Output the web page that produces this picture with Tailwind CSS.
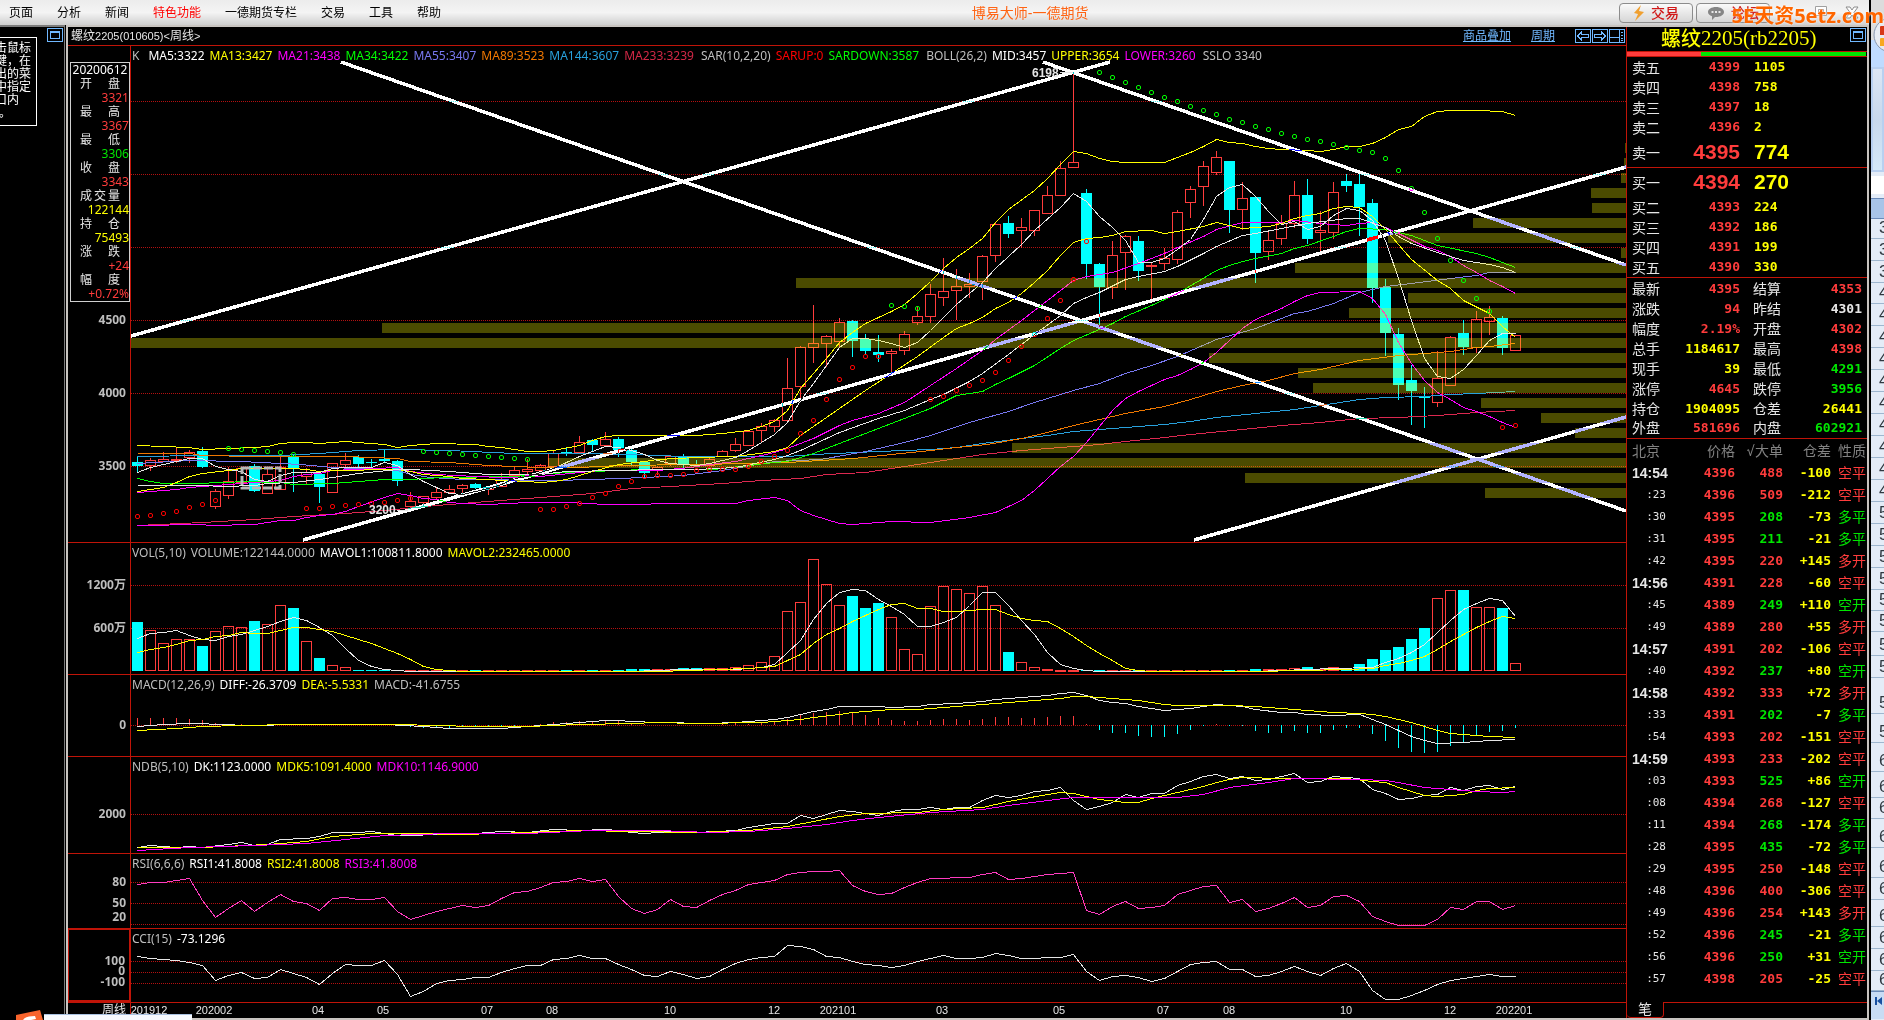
<!DOCTYPE html>
<html lang="zh-CN">
  <head>
    <meta charset="utf-8" />
    <title>博易大师-一德期货</title>
    <script src="https://cdn.jsdelivr.net/npm/@tailwindcss/browser@4"></script>
  </head>
  <body class="relative flex h-screen overflow-hidden bg-black font-['Liberation_Sans','Noto_Sans_CJK_SC',sans-serif] text-xs text-[#e6e6e6]">
    <div class="flex min-w-0 flex-1 flex-col">
      <!-- Menu bar -->
      <header class="relative flex h-[25px] shrink-0 items-center justify-between bg-linear-to-b from-[#ececec] via-[#f4f4f4] to-[#cfcfcf] text-black">
        <nav class="flex gap-6 pl-[9px] leading-6 whitespace-nowrap">
          <a href="#">页面</a>
          <a href="#">分析</a>
          <a href="#">新闻</a>
          <a href="#" class="text-[#ff0000]">特色功能</a>
          <a href="#">一德期货专栏</a>
          <a href="#">交易</a>
          <a href="#">工具</a>
          <a href="#">帮助</a>
        </nav>
        <h1 class="text-sm text-[#ff6414]">博易大师-一德期货</h1>
        <div class="flex w-[250px] items-center gap-[3px]">
          <button class="flex h-5 w-[74px] items-center justify-center gap-1.5 rounded-sm border border-[#8c8c8c] bg-linear-to-b from-[#fafafa] to-[#d6d6d6] text-sm font-medium text-[#d01818]">
            <svg viewBox="0 0 12 16" class="h-4 w-3"><path d="M8 0 1 8l4 1-3 7 9-9-5-1z" fill="#f0a030" /></svg>交易
          </button>
          <button class="flex h-5 w-[74px] items-center justify-center gap-1.5 rounded-sm border border-[#8c8c8c] bg-linear-to-b from-[#fafafa] to-[#d6d6d6] text-sm font-medium text-[#d01818]">
            <svg viewBox="0 0 18 14" class="h-3.5 w-[18px]">
              <path d="M9 1c4.600 0 8 2.200 8 5s-3.400 5-8 5l-1-.1L5 14v-3.700C2.600 9.500 1 8 1 6c0-2.800 3.400-5 8-5z" fill="#858585" />
              <path d="M4.500 5h2v2h-2zM8 5h2v2H8zM11.500 5h2v2h-2z" fill="#e8e8e8" />
            </svg>论坛
          </button>
          <button aria-label="还原" class="ml-10 h-4 w-4">
            <svg viewBox="0 0 16 16" fill="#fff" stroke="#a0a0a0"><path d="M2.500 1.500h11v9h-11zM5.500 4.500h5v3h-5z" /></svg>
          </button>
          <button aria-label="关闭" class="ml-3 h-4 w-4">
            <svg viewBox="0 0 16 16" fill="#fff" stroke="#8c8c8c"><path d="M2 2h4l2 3 2-3h4L10 7.500 14 13h-4L8 10l-2 3H2l4-5.500z" /></svg>
          </button>
        </div>
      </header>

      <div class="flex min-h-0 flex-1">
        <!-- Empty side window -->
        <aside class="relative w-[65px] shrink-0 overflow-hidden border-t-2 border-r border-[#7c7c7c]">
          <button aria-label="最大化" class="absolute top-px right-px h-[14px] w-4">
            <svg viewBox="0 0 16 14" fill="none" stroke="#70b8ff" shape-rendering="crispEdges"><path d="M.5.500h15v13H.5zM3.500 3.500h9v7h-9zM3.500 4.500h9" /></svg>
          </button>
          <p class="absolute top-[10px] -left-2 h-[89px] w-[45px] border border-white pt-1 pl-0.5 leading-[13px] whitespace-nowrap text-white">
            击鼠标<br />键，在<br />出的菜<br />中指定<br />口内<br /><span class="ml-1">。</span>
          </p>
        </aside>

        <main class="ml-px flex min-w-0 flex-1 flex-col border-t-2 border-b-2 border-l-2 border-[#c8c4c0]">
          <div class="flex min-h-0 flex-1">
            <!-- Chart window -->
            <div class="flex min-w-0 flex-1 flex-col">
              <div class="flex h-[19px] shrink-0 items-center justify-between border-b border-[#c01408] pr-px pl-[3px]">
                <h2>螺纹<span class="text-[11px]">2205(010605)&lt;</span>周线<span class="text-[11px]">&gt;</span></h2>
                <div class="flex items-center text-[#70b8ff]">
                  <a href="#" class="mr-5 underline">商品叠加</a>
                  <a href="#" class="mr-5 underline">周期</a>
                  <svg viewBox="0 0 50 15" class="h-[15px] w-[50px]" fill="none" stroke="#70b8ff" shape-rendering="crispEdges">
                    <path d="M.5.500h15v13H.5zM17.500.500h15v13h-15zM34.500.500h15v13h-15zM34.500 8.500h10M44.500.500v13M46 3.500h2M46 6.500h2M46 9.500h2M46 11.500h2" />
                    <path d="M2.500 7l4-4v2.500h7v3h-7V11zM30.500 7l-4-4v2.500h-7v3h7V11z" />
                  </svg>
                </div>
              </div>

              <div class="grid min-h-0 flex-1 grid-rows-[497fr_132fr_82fr_97fr_75fr_74fr] font-['Noto_Sans','Noto_Sans_CJK_SC',sans-serif] leading-5 whitespace-nowrap text-[#bebebe]">
                <section class="flex min-h-0 border-b border-[#c01408]">
                  <div id="axis-k" class="relative w-[63px] shrink-0 border-r border-[#c01408]">
                    <dl id="quote" class="mt-4 ml-0.5 border border-[#d0d0d0] text-right leading-[14px]"></dl>
                  </div>
                  <div class="relative min-w-0 flex-1">
                    <svg id="k" viewBox="131 46 1495 496" preserveAspectRatio="none" class="absolute inset-0 h-full w-full"></svg>
                    <p class="relative flex gap-[5px] pl-px">
                      <span class="mr-1">K</span>
                      <span class="text-white">MA5:3322</span>
                      <span class="text-[#ffff00]">MA13:3427</span>
                      <span class="text-[#ff00ff]">MA21:3438</span>
                      <span class="text-[#00ff00]">MA34:3422</span>
                      <span class="text-[#7878f0]">MA55:3407</span>
                      <span class="text-[#f07800]">MA89:3523</span>
                      <span class="text-[#28a0dc]">MA144:3607</span>
                      <span class="text-[#d22846]">MA233:3239</span>
                      <span class="ml-0.5">SAR(10,2,20)</span>
                      <span class="text-[#ff0000]">SARUP:0</span>
                      <span class="text-[#00ff00]">SARDOWN:3587</span>
                      <span class="ml-0.5">BOLL(26,2)</span>
                      <span class="text-white">MID:3457</span>
                      <span class="text-[#ffff00]">UPPER:3654</span>
                      <span class="text-[#ff00ff]">LOWER:3260</span>
                      <span class="ml-0.5">SSLO 3340</span>
                    </p>
                  </div>
                </section>

                <section class="flex min-h-0 border-b border-[#c01408]">
                  <div id="axis-vol" class="relative w-[63px] shrink-0 border-r border-[#c01408]"></div>
                  <div class="relative min-w-0 flex-1">
                    <svg id="vol" viewBox="131 543 1495 131" preserveAspectRatio="none" class="absolute inset-0 h-full w-full"></svg>
                    <p class="relative flex gap-[5px] pl-px">
                      <span>VOL(5,10)</span>
                      <span>VOLUME:122144.0000</span>
                      <span class="text-white">MAVOL1:100811.8000</span>
                      <span class="text-[#ffff00]">MAVOL2:232465.0000</span>
                    </p>
                  </div>
                </section>

                <section class="flex min-h-0 border-b border-[#c01408]">
                  <div id="axis-macd" class="relative w-[63px] shrink-0 border-r border-[#c01408]"></div>
                  <div class="relative min-w-0 flex-1">
                    <svg id="macd" viewBox="131 675 1495 81" preserveAspectRatio="none" class="absolute inset-0 h-full w-full"></svg>
                    <p class="relative flex gap-[5px] pl-px">
                      <span>MACD(12,26,9)</span>
                      <span class="text-white">DIFF:-26.3709</span>
                      <span class="text-[#ffff00]">DEA:-5.5331</span>
                      <span>MACD:-41.6755</span>
                    </p>
                  </div>
                </section>

                <section class="flex min-h-0 border-b border-[#c01408]">
                  <div id="axis-ndb" class="relative w-[63px] shrink-0 border-r border-[#c01408]"></div>
                  <div class="relative min-w-0 flex-1">
                    <svg id="ndb" viewBox="131 757 1495 96" preserveAspectRatio="none" class="absolute inset-0 h-full w-full"></svg>
                    <p class="relative flex gap-[5px] pl-px">
                      <span>NDB(5,10)</span>
                      <span class="text-white">DK:1123.0000</span>
                      <span class="text-[#ffff00]">MDK5:1091.4000</span>
                      <span class="text-[#ff00ff]">MDK10:1146.9000</span>
                    </p>
                  </div>
                </section>

                <section class="flex min-h-0 border-b border-[#c01408]">
                  <div id="axis-rsi" class="relative w-[63px] shrink-0 border-r border-[#c01408]"></div>
                  <div class="relative min-w-0 flex-1">
                    <svg id="rsi" viewBox="131 854 1495 74" preserveAspectRatio="none" class="absolute inset-0 h-full w-full"></svg>
                    <p class="relative flex gap-[5px] pl-px">
                      <span>RSI(6,6,6)</span>
                      <span class="text-white">RSI1:41.8008</span>
                      <span class="text-[#ffff00]">RSI2:41.8008</span>
                      <span class="text-[#ff00ff]">RSI3:41.8008</span>
                    </p>
                  </div>
                </section>

                <section class="flex min-h-0 border-b border-[#c01408]">
                  <div id="axis-cci" class="relative w-[63px] shrink-0 border border-r-2 border-b-2 border-[#c01408]"></div>
                  <div class="relative min-w-0 flex-1">
                    <svg id="cci" viewBox="131 929 1495 73" preserveAspectRatio="none" class="absolute inset-0 h-full w-full"></svg>
                    <p class="relative flex gap-[5px] pl-px">
                      <span>CCI(15)</span>
                      <span class="text-white">-73.1296</span>
                    </p>
                  </div>
                </section>
              </div>

              <div class="flex h-[15px] shrink-0 leading-[14px]">
                <div class="w-[63px] border-r border-[#c01408] pr-1 text-right">周线</div>
                <div id="dates" class="relative flex-1 text-[11px]"></div>
              </div>
            </div>

            <!-- Quote panel -->
            <aside class="flex w-[241px] shrink-0 flex-col border-l border-[#c01408]">
              <div class="relative flex h-6 shrink-0 items-center pl-[34px] text-xl font-medium text-[#ffff00]">
                螺纹<span class="font-['Liberation_Serif',serif] text-[21px]">2205(rb2205)</span>
                <button aria-label="最大化" class="absolute top-px right-px h-[14px] w-4">
                  <svg viewBox="0 0 16 14" fill="none" stroke="#70b8ff" shape-rendering="crispEdges"><path d="M.5.500h15v13H.5zM3.500 3.500h9v7h-9zM3.500 4.500h9" /></svg>
                </button>
              </div>
              <div class="flex h-[6px] shrink-0 border-y border-[#c01408]">
                <div class="w-[31%] bg-[#ff3c3c]"></div>
                <div class="mr-px flex-1 bg-[#00e600]"></div>
              </div>

              <table class="w-full font-['DejaVu_Sans_Mono','Noto_Sans_CJK_SC',monospace] text-[13px] leading-4 font-bold">
                <tbody id="asks" class="border-b border-[#c01408]"></tbody>
                <tbody id="bids" class="border-b border-[#c01408]"></tbody>
              </table>
              <table class="mt-px w-full border-b border-[#c01408] font-['DejaVu_Sans_Mono','Noto_Sans_CJK_SC',monospace] text-[13px] leading-4 font-bold">
                <tbody id="stats"></tbody>
              </table>

              <table class="mt-px w-full font-['DejaVu_Sans_Mono','Noto_Sans_CJK_SC',monospace] text-[13px] leading-4 font-bold">
                <thead class="text-sm text-[#828282]">
                  <tr class="h-[22px]">
                    <th class="pl-[5px] text-left font-normal">北京</th>
                    <th class="text-right font-normal">价格</th>
                    <th class="text-right font-normal">√大单</th>
                    <th class="text-right font-normal">仓差</th>
                    <th class="pr-px text-right font-normal">性质</th>
                  </tr>
                </thead>
                <tbody id="ticks"></tbody>
              </table>

              <div class="mt-auto flex h-4 shrink-0 text-sm leading-[15px]">
                <button class="w-[37px] rounded-b-sm border-r border-b border-[#c01408]">笔</button>
                <div class="flex-1 border-t border-[#c01408]"></div>
              </div>
            </aside>
            <div class="w-0.5 shrink-0 bg-[#c8c4c0]"></div>
          </div>
        </main>
      </div>
    </div>

    <!-- Edge of the spreadsheet window behind -->
    <aside class="ml-0.5 flex w-[13px] shrink-0 flex-col overflow-hidden bg-[#e4ecf7] text-[17px] text-[#303840]">
      <svg viewBox="0 0 13 67" class="h-[67px] w-[13px] shrink-0">
        <path d="M0 0h13v40H0z" fill="#dcdcdc" />
        <path d="M0 40h13v27H0z" fill="#bfdbff" />
        <circle cx="20" cy="35" r="17" fill="#e8ecf2" stroke="#8a98b0" />
        <path d="M13 26h-3q-1 0-1 1v8h4z" fill="#d83818" />
        <path d="M13 38h-3q-1 0-1 1v7h4z" fill="#f8a820" />
      </svg>
      <div class="h-[105px] shrink-0 border-2 border-[#b8d0f0] bg-linear-to-b from-[#dce6f4] via-[#c8d8ec] to-[#d4e8f8]"></div>
      <div class="mt-1 h-[18px] shrink-0 bg-white"></div>
      <div class="mt-1 h-[21px] shrink-0 border-y border-[#6a8ab8] bg-[#a8c4e8]"></div>
      <div id="sheet"></div>
      <div class="flex h-7 items-start border-t border-[#6a8ab8] bg-[#c8dcf4] pt-1">
        <svg viewBox="0 0 13 10" class="h-2.5 w-[13px]"><path d="M4 1h2v8H4zM11 1v8L6 5z" fill="#1850a0" /></svg>
      </div>
    </aside>

    <p class="absolute top-0 right-0 text-xl leading-8 font-bold whitespace-nowrap text-[#ff6600] font-['Noto_Sans','Noto_Sans_CJK_SC',sans-serif] [text-shadow:0_0_2px_#fff]">5E天资5etz.com</p>

    <!-- Input method bar -->
    <div class="absolute bottom-0 left-4 flex items-end">
      <svg viewBox="0 0 28 10" class="h-2.5 w-7"><path d="M0 5 24 0l3 10H0z" fill="#f8642c" /><path d="M7 10q2-4 12-4l1 3-5 1z" fill="#fff" /></svg>
      <div class="h-1.5 w-[148px] border-t border-[#a8c0e0] bg-[#f6f9fe]"></div>
    </div>

    <script>
      var RED = "#ff3c3c", CYAN = "#00ffff", YELLOW = "#ffff00", MAGENTA = "#ff00ff", GREEN = "#00ff00", WHITE = "#e6e6e6";

      function draw(id, markup) {
        document.getElementById(id).insertAdjacentHTML("beforeend", markup);
      }

      // Centre of the n-th weekly bar
      function barX(n) {
        return 137 + 13 * n;
      }

      function rect(x, y, w, h, color) {
        return `<rect x="${x}" y="${y}" width="${w}" height="${h}" fill="${color}" shape-rendering="crispEdges"/>`;
      }

      function hollow(x, y, w, h, color) {
        return `<rect x="${x + 0.5}" y="${y + 0.5}" width="${w - 1}" height="${Math.max(h - 1, 1)}" fill="none" stroke="${color}" shape-rendering="crispEdges"/>`;
      }

      function line(points, color) {
        return `<polyline points="${points}" fill="none" stroke="${color}" transform="translate(.5 .5)" shape-rendering="crispEdges"/>`;
      }

      // "index,y" pairs; bars in between are interpolated by the line itself
      function series(text, color) {
        var points = text.trim().split(/\s+/).map(function (pair) {
          var p = pair.split(",");
          return barX(+p[0]) + "," + p[1];
        });
        return line(points.join(" "), color);
      }

      function dense(values, color) {
        return line(values.map(function (y, n) { return barX(n) + "," + y; }).join(" "), color);
      }

      function grid(id, top, height, levels) {
        levels.forEach(function (level) {
          var y = level[0];
          draw(id, `<path d="M131 ${y + 0.5}H1626" stroke="#b41010" stroke-dasharray="1 1" shape-rendering="crispEdges"/>`);
          if (level[1] !== undefined) {
            var at = (((level[2] || y) - top) / height) * 100;
            draw("axis-" + id, `<span class="absolute right-1 -translate-y-1/2 leading-3 font-bold" style="top:${at}%">${level[1]}</span>`);
          }
        });
      }

      grid("k", 46, 496, [[101], [174], [247], [320, "4500"], [393, "4000"], [466, "3500"]]);
      grid("vol", 543, 131, [[585, "1200万"], [628, "600万"]]);
      grid("macd", 675, 81, [[725, "0"]]);
      grid("ndb", 757, 96, [[814, "2000"]]);
      grid("rsi", 854, 74, [[882, "80"], [903, "50"], [924, "20", 917]]);
      grid("cci", 929, 73, [[961, "100"], [972, "0"], [983, "-100"]]);

      // Candles: direction, body top, body bottom, high, low
      var candles = `c 462 466 457 472|r 460 465 458 471|r 459 461 452 461|r 459 460 448 463|r 452 457 450 463|c 451 467 447 468|r 491 506 489 509|r 481 495 467 499|r 468 482 468 482|c 466 491 464 492|r 474 493 468 493|r 467 489 457 489|c 457 469 454 492|r 472 476 468 485|c 474 487 471 503|r 463 492 463 493|r 460 464 453 467|c 457 464 455 468|c 462 463 459 470|c 459 461 450 463|c 461 481 460 486|r 501 506 492 509|r 496 502 496 506|r 492 497 487 499|r 489 492 485 493|r 485 488 484 494|c 484 488 483 489|r 487 489 487 495|r 480 486 473 487|r 470 475 467 478|r 469 471 459 475|r 465 470 464 471|r 453 466 450 466|c 452 453 447 456|r 442 452 436 453|c 440 445 439 451|r 439 445 432 446|c 439 450 437 457|c 450 462 449 465|c 462 473 462 477|r 467 469 466 475|r 456 463 456 466|c 457 464 454 468|c 464 465 460 467|r 459 465 458 466|r 451 456 450 457|r 444 450 438 452|r 431 445 431 446|r 426 430 423 442|r 420 426 419 432|r 388 420 358 421|r 347 386 346 398|r 343 347 305 363|r 336 343 335 367|r 322 341 318 347|c 321 341 320 357|c 339 351 334 354|c 352 355 335 362|r 351 353 349 373|r 334 350 331 355|r 316 322 307 325|r 294 316 284 323|r 291 297 258 306|r 286 290 269 320|r 284 286 273 298|r 256 281 255 300|r 224 255 223 262|c 223 234 216 238|r 227 230 218 248|r 210 230 210 236|r 195 213 186 214|r 168 195 161 195|r 162 167 72 168|c 193 264 189 279|c 264 287 263 327|r 255 287 241 299|r 236 252 235 290|c 241 271 236 281|r 265 266 262 299|r 258 263 248 270|r 212 259 210 264|r 189 202 186 218|r 166 186 161 206|r 157 172 151 175|c 161 210 161 233|r 198 209 182 230|c 197 253 197 283|r 240 251 231 260|r 223 238 215 245|r 195 223 181 228|c 195 239 179 244|r 230 232 211 251|r 192 232 182 239|c 181 186 174 192|c 184 207 174 236|c 203 288 199 303|c 287 333 279 356|c 334 385 328 400|c 380 391 365 425|c 396 398 387 428|r 378 402 351 407|r 337 385 336 385|c 333 347 320 355|r 319 347 311 353|r 317 321 306 335|c 318 348 316 355|r 335 350 335 351`.split("|").map(function (row) {
        var f = row.split(" ");
        return { up: f[0] === "r", top: +f[1], bottom: +f[2], high: +f[3], low: +f[4] };
      });

      draw("k", candles.map(function (c, n) {
        var x = barX(n);
        if (!c.up) return rect(x, c.high, 1, c.low - c.high, CYAN) + rect(x - 5, c.top, 11, Math.max(c.bottom - c.top, 1), CYAN);
        return rect(x, c.high, 1, c.top - c.high, RED) + rect(x, c.bottom, 1, c.low - c.bottom, RED) + hollow(x - 5, c.top, 11, c.bottom - c.top + 1, RED);
      }).join(""));

      // Moving averages and Bollinger bands
      draw("k", [
        ["#dc2850", "137,525 202,522 254,519 293,516 345,513 384,510 436,505 500,500 540,497 592,493 631,488 670,486 722,483 761,480 800,478 826,474 865,472 904,466 943,460 982,454 1021,450 1073,446 1099,444 1125,441 1164,437 1190,434 1242,429 1281,425 1320,422 1359,418 1398,417 1437,415 1476,412 1515,410"],
        ["#28a0dc", "137,456 202,455 280,455 319,453 358,450 397,449 449,450 514,453 592,453 631,454 683,456 787,456 813,454 878,451 930,449 956,447 982,443 1021,438 1047,435 1073,431 1099,429 1125,427 1164,424 1190,421 1216,417 1255,413 1294,409 1320,405 1359,399 1385,397 1424,396 1450,394 1476,393 1515,391"],
        ["#f07800", "137,453 189,453 202,455 254,456 345,456 397,458 410,461 449,462 488,465 540,467 579,467 618,465 696,464 748,463 787,462 853,458 891,454 930,450 956,447 987,444 1021,438 1047,432 1073,425 1099,419 1125,413 1164,406 1190,399 1216,391 1242,385 1268,380 1294,373 1320,369 1359,360 1398,355 1424,353 1450,351 1463,349 1476,347 1489,346 1515,343"],
        ["#7878f0", "137,463 189,460 241,461 300,464 332,467 397,470 410,474 430,477 462,479 553,480 592,479 644,477 683,475 722,470 774,461 820,459 865,451 904,442 930,435 969,422 1008,411 1034,402 1060,394 1073,390 1099,383 1125,373 1151,365 1177,356 1216,339 1255,328 1294,313 1307,311 1333,303 1359,292 1385,286 1411,283 1450,278 1476,275 1489,272 1515,272"],
        [GREEN, "137,478 150,481 163,483 189,483 228,482 241,481 280,482 293,484 332,483 358,481 384,479 410,479 441,477 514,476 549,473 592,471 644,469 713,469 748,465 774,462 787,461 813,453 839,443 878,428 904,418 930,408 956,395 982,391 995,384 1008,378 1034,365 1060,348 1073,340 1099,329 1112,323 1125,316 1151,305 1177,293 1216,270 1229,265 1242,261 1255,258 1281,253 1294,248 1307,245 1333,236 1346,231 1359,228 1385,229 1411,235 1437,245 1476,253 1489,257 1515,267"],
        [MAGENTA, "137,492 176,489 189,487 202,486 215,485 254,482 280,480 293,476 306,474 319,473 332,470 397,467 410,471 436,474 475,476 501,477 540,476 560,474 600,470 657,470 690,467 709,464 735,461 761,455 774,452 787,448 813,438 839,425 852,420 878,413 904,402 930,385 956,368 982,350 995,339 1021,320 1047,300 1073,280 1086,276 1099,274 1112,272 1138,263 1164,253 1177,247 1203,236 1216,229 1242,222 1281,222 1294,220 1320,223 1346,225 1359,223 1372,222 1385,227 1398,233 1424,246 1437,250 1450,256 1463,265 1476,272 1489,280 1502,286 1515,293"],
        [YELLOW, "137,491 163,487 176,482 189,476 202,473 228,470 241,468 293,468 306,469 319,471 332,470 397,469 410,471 423,474 436,475 449,476 462,478 488,479 501,480 527,481 540,482 553,481 566,479 592,471 618,464 644,461 657,459 696,457 735,456 774,451 787,447 800,435 839,408 865,390 891,373 917,356 943,337 956,328 969,323 982,317 995,308 1008,302 1021,293 1034,282 1047,270 1060,255 1073,242 1086,238 1099,237 1112,235 1125,231 1151,230 1164,233 1177,231 1203,226 1216,222 1242,228 1268,226 1281,223 1294,218 1307,215 1320,213 1333,208 1346,206 1359,207 1372,216 1385,229 1411,259 1437,280 1450,288 1463,300 1489,313 1502,326 1515,337"],
        [WHITE, "137,485 202,485 223,486 254,485 267,483 293,482 319,479 332,477 358,473 397,469 410,469 449,471 488,474 540,474 566,471 618,470 657,469 696,469 735,467 774,459 787,455 800,450 839,432 878,418 904,410 930,399 943,394 969,381 982,373 1008,354 1034,334 1060,315 1073,303 1086,297 1099,292 1125,279 1138,276 1164,271 1177,266 1203,253 1216,246 1242,235 1255,233 1281,228 1307,223 1346,218 1359,218 1385,227 1398,236 1411,243 1437,252 1463,260 1489,264 1502,267 1515,272"],
        [WHITE, "137,472 150,467 163,464 176,461 189,458 202,458 215,466 228,469 241,471 254,479 267,481 280,475 293,472 319,472 332,468 345,467 371,467 384,462 397,465 410,474 423,481 436,487 449,493 462,494 488,488 501,484 514,478 527,476 540,472 553,468 566,462 579,456 592,451 605,446 618,447 631,450 644,454 657,460 670,463 683,464 696,465 709,463 735,457 748,450 761,442 774,434 787,422 800,400 813,383 826,365 839,347 852,338 865,338 878,340 891,343 904,347 917,342 930,330 943,317 956,304 982,282 995,268 1021,244 1034,230 1060,207 1073,193 1086,201 1099,216 1112,227 1125,240 1138,262 1151,262 1164,258 1177,249 1190,239 1203,219 1216,196 1229,187 1242,184 1255,196 1268,211 1281,224 1294,221 1307,229 1320,226 1333,215 1346,208 1359,210 1372,220 1385,240 1398,278 1411,320 1424,358 1437,376 1450,378 1463,369 1476,355 1489,340 1502,333 1515,333"],
        [YELLOW, "137,445 188,447 202,449 227,448 254,447 267,446 280,443 293,442 306,442 319,443 345,441 370,443 384,444 397,447 410,445 423,444 436,443 475,444 488,446 501,447 514,449 527,451 540,451 553,450 579,445 592,440 605,436 618,435 660,435 696,435 722,433 748,430 761,426 774,421 787,410 800,388 813,373 826,358 839,342 852,332 865,323 891,311 904,304 917,293 930,281 943,268 956,257 969,248 982,238 995,222 1008,209 1034,190 1047,178 1060,164 1073,151 1086,153 1099,158 1112,161 1125,162 1164,162 1190,152 1203,146 1216,139 1229,142 1242,143 1255,146 1268,148 1281,149 1307,150 1320,151 1333,149 1346,146 1359,146 1372,143 1385,137 1398,129 1411,126 1424,116 1437,111 1450,110 1476,110 1502,111 1515,115"],
        [MAGENTA, "137,525 202,524 209,525 254,524 280,520 293,520 306,517 319,515 332,514 345,511 358,506 384,497 397,493 410,495 423,498 436,499 449,502 462,503 488,504 527,502 570,502 605,504 644,504 657,503 735,503 748,500 774,497 787,500 800,510 813,515 839,523 852,524 891,521 930,522 969,517 995,512 1021,500 1034,490 1047,478 1060,466 1073,456 1086,442 1112,410 1125,398 1138,391 1164,379 1177,375 1190,369 1203,362 1216,352 1242,328 1255,319 1281,308 1294,301 1307,295 1320,292 1359,291 1372,298 1385,314 1398,342 1411,363 1424,380 1437,392 1450,399 1463,407 1476,411 1489,416 1502,422 1515,427"]
      ].map(function (s) { return line(s[1], s[0]); }).join(""));

      // Volume by price, left edge of every 15px band
      draw("k", [1625, 1624, 1621, 1591, 1592, 1473, 1388, 1621, 1295, 796, 1408, 1349, 382, 131, 1209, 1298, 1313, 1481, 1541, 1575, 1012, 548, 1245, 1485].map(function (x, n) {
        return rect(x, 143 + 15 * n, 1626 - x, 10, "rgb(255 255 0 / 0.294)");
      }).join(""));

      // SAR dots: colour, first bar, y values
      [
        ["#ff0000", 0, [516, 515, 513, 511, 507, 504, 500]],
        [GREEN, 7, [448, 449, 450, 451, 452, 454]],
        ["#ff0000", 13, [508, 508, 506, 505, 504, 503, 502, 500, 498]],
        [GREEN, 22, [451, 452, 453, 454, 455, 456, 457, 458, 459]],
        ["#ff0000", 31, [509, 509, 506, 503, 497, 493, 486, 481, 476, 475, 475, 474, 470, 469, 469, 469, 466, 461, 456, 450, 433, 420, 399, 379, 367, 356, 356]],
        [GREEN, 58, [305, 306, 308]],
        ["#ff0000", 61, [399, 396, 390, 385, 380, 372, 360, 346, 334, 318, 300, 279, 241]],
        [GREEN, 74, [72, 77, 82, 87, 92, 97, 101, 106, 110, 114, 119, 122, 126, 129, 133, 136, 139, 141, 144, 147, 150, 152, 158, 170, 188, 212, 238, 260, 280, 298, 311]],
        ["#ff0000", 105, [427, 425]]
      ].forEach(function (run) {
        draw("k", run[2].map(function (y, n) {
          return `<rect x="${barX(run[1] + n) - 1.5}" y="${y - 1.5}" width="4" height="4" rx="1.5" fill="none" stroke="${run[0]}"/>`;
        }).join(""));
      });

      // Trend lines invert whatever they cross
      draw("k", `<path class="mix-blend-difference" d="M341 62 1626 511M131 336 1110 62M1043 62 1626 265M303 540 1626 167M1194 540 1626 417" fill="none" stroke="#fff" stroke-width="3.500" shape-rendering="crispEdges"/>
        <rect x="242" y="468" width="38" height="20" fill="none" stroke="#b8b8b8" stroke-width="3" stroke-dasharray="9 2"/>
        <g font-family="Liberation Sans" font-size="12" font-weight="bold" fill="#e6e6e6"><text x="1032" y="77">6198</text><text x="369" y="514">3200</text></g>
        <path d="M1060 72.500h13M397 510.500h11" stroke="#e6e6e6"/>`);

      // Volume
      var volumes = [622, 630, 643, 639, 639, 646, 631, 626, 627, 621, 624, 605, 608, 641, 658, 665, 667, 670, 670, 670, 670, 670, 670, 670, 670, 670, 670, 670, 670, 670, 670, 670, 670, 670, 670, 670, 670, 670, 669, 669, 669, 669, 668, 668, 668, 668, 667, 665, 662, 656, 611, 602, 559, 584, 605, 596, 608, 603, 617, 649, 654, 606, 586, 589, 593, 586, 605, 652, 662, 667, 669, 670, 670, 670, 670, 670, 670, 670, 670, 670, 670, 670, 670, 670, 670, 670, 669, 669, 669, 668, 667, 669, 667, 669, 664, 659, 650, 647, 639, 628, 598, 590, 590, 607, 607, 608, 663];
      draw("vol", volumes.map(function (y, n) {
        return candles[n].up ? hollow(barX(n) - 5, y, 11, 671 - y, RED) : rect(barX(n) - 5, y, 11, 671 - y, CYAN);
      }).join(""));
      draw("vol", series("0,638 1,633 2,632 3,630 4,635 5,639 6,640 7,636 8,634 9,630 10,626 11,621 12,617 13,620 14,627 15,635 16,648 17,660 18,666 19,669 20,670 21,671 38,671 42,669 46,669 48,667 49,664 50,652 51,640 52,619 53,603 54,592 55,589 56,590 57,599 58,606 59,614 60,626 61,626 62,622 63,617 64,605 65,592 66,592 67,605 68,620 69,634 70,652 71,664 72,668 73,670 74,671 86,671 92,668 95,667 96,662 97,658 98,652 99,644 100,632 101,620 102,609 103,603 104,598 105,600 106,616", WHITE));
      draw("vol", series("0,652 1,649 2,647 3,644 4,640 5,639 6,636 7,635 8,632 9,633 10,633 11,630 12,627 13,627 14,629 15,631 16,635 17,639 18,643 19,648 20,653 21,659 22,666 23,669 24,670 25,671 40,671 47,668 49,666 50,660 51,654 52,643 53,634 54,628 55,621 56,615 57,609 58,604 59,603 60,608 61,608 62,611 63,611 64,610 65,609 66,609 67,614 68,618 69,620 70,621 71,628 72,636 73,645 74,653 75,660 76,668 77,670 78,671 86,671 93,669 95,668 96,665 97,663 98,660 99,656 100,649 101,641 102,634 103,627 104,621 105,616 106,618", YELLOW));

      // MACD histogram around 725
      var histogram = [718, 718, 718, 718, 719, 720, 723, 724, 724, 725, 725, 724, 724, 724, 724, 724, 724, 724, 724, 724, 725, 727, 728, 728, 728, 727, 727, 727, 726, 726, 725, 724, 722, 722, 721, 721, 720, 721, 723, 724, 725, 725, 725, 725, 725, 724, 723, 724, 723, 722, 719, 715, 713, 712, 711, 712, 715, 718, 720, 721, 721, 720, 719, 719, 720, 719, 717, 717, 718, 718, 717, 716, 716, 724, 730, 733, 733, 736, 737, 737, 734, 730, 726, 724, 726, 726, 731, 733, 733, 731, 733, 733, 730, 728, 728, 734, 741, 748, 752, 753, 752, 746, 742, 736, 732, 731, 728];
      draw("macd", histogram.map(function (y, n) {
        return y < 725 ? rect(barX(n), y, 1, 725 - y, RED) : rect(barX(n), 725, 1, y - 725, CYAN);
      }).join(""));
      draw("macd", series("0,726 2,724 4,723 5,723 6,724 9,725 12,724 19,724 22,726 24,728 28,728 30,726 32,724 34,722 36,720 37,720 38,721 40,722 44,723 46,722 48,720 49,719 50,717 51,714 52,711 53,709 54,706 57,706 58,707 60,706 61,704 63,703 65,701 66,699 68,697 70,695 71,693 72,692 73,695 74,700 75,702 76,703 77,706 79,710 80,709 81,708 83,704 85,706 86,709 88,712 89,712 90,714 92,715 94,714 95,719 96,724 97,730 98,736 99,740 100,743 102,742 104,740 106,739", WHITE));
      draw("macd", series("0,730 3,728 5,726 8,725 12,724 20,724 23,725 26,726 30,726 32,725 34,724 38,723 40,722 43,723 48,722 50,720 51,719 52,717 54,714 55,712 57,710 58,709 60,709 61,708 63,706 65,704 67,702 69,700 71,698 72,696 73,696 75,698 77,700 79,704 80,705 84,705 86,706 88,708 90,710 92,712 94,713 95,714 96,716 97,719 98,722 99,726 100,730 101,733 102,734 104,736 106,737", YELLOW));

      // NDB
      draw("ndb", series("0,847 1,845 3,847 4,846 5,847 7,844 8,842 9,845 10,844 11,839 13,838 14,836 15,832 17,832 18,831 19,833 20,835 21,835 23,834 26,833 28,831 30,832 32,829 34,830 36,829 37,830 38,832 39,833 40,832 41,831 43,832 46,830 47,827 49,823 50,823 51,815 52,818 53,814 54,810 55,811 57,815 58,811 59,809 60,809 61,807 62,809 63,807 64,807 65,800 66,795 67,797 68,795 69,791 70,790 71,787 72,800 73,809 74,806 75,802 76,794 77,797 78,793 79,793 80,785 81,781 82,776 83,774 84,778 85,776 86,780 87,779 88,776 89,773 90,782 91,781 92,776 94,778 95,789 96,793 97,799 98,798 99,795 100,794 101,787 102,790 103,786 104,785 105,789 106,786", WHITE));
      draw("ndb", series("0,847 5,847 10,844 13,841 15,836 18,833 21,833 25,834 30,832 34,830 38,831 43,832 47,830 50,826 52,821 54,816 56,813 60,812 62,809 65,807 67,801 70,794 71,792 72,793 74,799 76,802 77,802 78,798 80,792 82,786 83,782 84,779 85,777 88,778 93,778 95,781 96,782 97,787 99,795 100,796 102,794 103,790 104,788 106,787", YELLOW));
      draw("ndb", series("0,850 4,847 9,845 13,843 16,839 19,835 24,833 30,833 35,830 40,830 44,832 47,831 50,828 53,824 55,820 57,817 61,812 65,809 67,805 70,800 72,797 80,797 82,794 84,787 87,782 89,778 94,779 96,780 97,782 99,787 101,789 103,791 105,792 106,791", MAGENTA));

      // RSI and CCI
      draw("rsi", dense([884, 882, 882, 880, 878, 900, 917, 908, 900, 911, 902, 894, 901, 903, 910, 898, 897, 899, 899, 897, 911, 919, 915, 911, 908, 905, 907, 905, 898, 892, 891, 887, 882, 881, 878, 881, 879, 896, 908, 913, 909, 899, 906, 907, 900, 894, 890, 884, 882, 880, 874, 872, 871, 871, 870, 885, 891, 894, 893, 887, 882, 878, 878, 877, 877, 874, 872, 879, 878, 876, 874, 873, 872, 910, 914, 906, 901, 908, 907, 905, 894, 890, 886, 885, 902, 899, 911, 908, 903, 897, 907, 905, 896, 895, 901, 916, 921, 925, 925, 925, 919, 907, 909, 901, 901, 909, 905], "#ff3cc0"));
      draw("cci", dense([956, 958, 959, 960, 962, 965, 980, 975, 972, 978, 977, 969, 973, 977, 984, 973, 964, 965, 965, 960, 974, 996, 991, 983, 980, 979, 977, 977, 972, 968, 965, 965, 959, 958, 955, 958, 958, 964, 969, 975, 976, 971, 974, 978, 976, 969, 963, 959, 957, 956, 945, 946, 949, 956, 957, 961, 964, 965, 967, 965, 961, 958, 955, 958, 958, 957, 953, 955, 958, 958, 957, 957, 954, 971, 980, 976, 975, 977, 981, 978, 971, 964, 962, 961, 969, 969, 976, 975, 971, 966, 971, 975, 968, 963, 971, 990, 999, 999, 995, 990, 984, 980, 978, 976, 974, 976, 976], WHITE));

      // Time axis
      [["201912", 149], ["202002", 214], ["04", 318], ["05", 383], ["07", 487], ["08", 552], ["10", 670], ["12", 774], ["202101", 838], ["03", 942], ["05", 1059], ["07", 1163], ["08", 1229], ["10", 1346], ["12", 1450], ["202201", 1514]].forEach(function (d) {
        draw("dates", `<span class="absolute -translate-x-1/2" style="left:${((d[1] - 131) / 1495) * 100}%">${d[0]}</span>`);
      });

      // Values of the selected bar
      draw("quote", `<dt class="text-center text-white">20200612</dt>` + [
        ["开盘", "3321", "r"], ["最高", "3367", "r"], ["最低", "3306", "g"], ["收盘", "3343", "r"],
        ["成交量", "122144", "y"], ["持仓", "75493", "y"], ["涨跌", "+24", "r"], ["幅度", "+0.72%", "r"]
      ].map(function (q) {
        var tone = { r: "text-[#ff3c3c]", g: "text-[#00e600]", y: "text-[#ffff00]" }[q[2]];
        return `<dt class="mx-auto flex w-10 justify-between text-[#e6e6e6]">${q[0].split("").map(function (c) { return `<span>${c}</span>`; }).join("")}</dt><dd class="${tone}">${q[1]}</dd>`;
      }).join(""));

      // Order book
      function bookRow(name, price, size, big) {
        return `<tr class="${big ? "h-[30px] font-['Liberation_Sans'] text-[21px]" : "h-5"}">
          <th class="w-[60px] pl-[5px] text-left font-['Noto_Sans_CJK_SC'] text-sm leading-4 font-normal">${name}</th>
          <td class="w-[53px] text-right text-[#ff3c3c]">${price}</td>
          <td class="pl-[14px] text-[#ffff00]">${size}</td></tr>`;
      }
      draw("asks", bookRow("卖五", 4399, 1105) + bookRow("卖四", 4398, 758) + bookRow("卖三", 4397, 18) + bookRow("卖二", 4396, 2) + bookRow("卖一", 4395, 774, true));
      draw("bids", bookRow("买一", 4394, 270, true) + bookRow("买二", 4393, 224) + bookRow("买三", 4392, 186) + bookRow("买四", 4391, 199) + bookRow("买五", 4390, 330));

      var tones = { r: "text-[#ff3c3c]", g: "text-[#00e600]", y: "text-[#ffff00]", w: "text-[#e6e6e6]" };
      draw("stats", [
        ["最新", "4395", "r", "结算", "4353", "r"], ["涨跌", "94", "r", "昨结", "4301", "w"],
        ["幅度", "2.19%", "r", "开盘", "4302", "r"], ["总手", "1184617", "y", "最高", "4398", "r"],
        ["现手", "39", "y", "最低", "4291", "g"], ["涨停", "4645", "r", "跌停", "3956", "g"],
        ["持仓", "1904095", "y", "仓差", "26441", "y"], ["外盘", "581696", "r", "内盘", "602921", "g"]
      ].map(function (s) {
        return `<tr class="h-5">
          <th class="w-[38px] pl-[5px] text-left text-sm leading-4 font-normal">${s[0]}</th>
          <td class="w-[75px] text-right ${tones[s[2]]}">${s[1]}</td>
          <th class="w-[50px] pl-[13px] text-left text-sm leading-4 font-normal">${s[3]}</th>
          <td class="pr-[5px] text-right ${tones[s[5]]}">${s[4]}</td></tr>`;
      }).join(""));

      // Large trades
      draw("ticks", [
        ["14:54", 4396, 488, "-100", "空平", "r"], [":23", 4396, 509, "-212", "空平", "r"], [":30", 4395, 208, "-73", "多平", "g"],
        [":31", 4395, 211, "-21", "多平", "g"], [":42", 4395, 220, "+145", "多开", "r"], ["14:56", 4391, 228, "-60", "空平", "r"],
        [":45", 4389, 249, "+110", "空开", "g"], [":49", 4389, 280, "+55", "多开", "r"], ["14:57", 4391, 202, "-106", "空平", "r"],
        [":40", 4392, 237, "+80", "空开", "g"], ["14:58", 4392, 333, "+72", "多开", "r"], [":33", 4391, 202, "-7", "多平", "g"],
        [":54", 4393, 202, "-151", "空平", "r"], ["14:59", 4393, 233, "-202", "空平", "r"], [":03", 4393, 525, "+86", "空开", "g"],
        [":08", 4394, 268, "-127", "空平", "r"], [":11", 4394, 268, "-174", "多平", "g"], [":28", 4395, 435, "-72", "多平", "g"],
        [":29", 4395, 250, "-148", "空平", "r"], [":48", 4396, 400, "-306", "空平", "r"], [":49", 4396, 254, "+143", "多开", "r"],
        [":52", 4396, 245, "-21", "多平", "g"], [":56", 4396, 250, "+31", "空开", "g"], [":57", 4398, 205, "-25", "空平", "r"]
      ].map(function (t) {
        var time = t[0].length > 3
          ? `<td class="w-[42px] pl-[5px] font-['Liberation_Sans'] text-sm leading-4">${t[0]}</td>`
          : `<td class="w-[42px] pr-[3px] text-right text-[11px] font-normal">${t[0]}</td>`;
        return `<tr class="h-[22px]">${time}
          <td class="w-[66px] text-right text-[#ff3c3c]">${t[1]}</td>
          <td class="w-12 text-right ${tones[t[5]]}">${t[2]}</td>
          <td class="w-12 text-right text-[#ffff00]">${t[3]}</td>
          <td class="pr-px text-right text-sm leading-4 font-normal ${tones[t[5]]}">${t[4]}</td></tr>`;
      }).join(""));

      // Spreadsheet row numbers, cut by the screen edge
      var edges = [219, 239, 261, 283, 304, 326, 348, 370, 392, 414, 436, 458, 480, 502, 524, 546, 568, 590, 611, 632, 656, 678, 714, 743, 772, 798, 819, 848, 878, 900, 927, 949, 971, 991];
      draw("sheet", edges.slice(1).map(function (y, n) {
        var digit = n < 3 ? 3 : n < 13 ? 4 : n < 23 ? 5 : 6;
        return `<div class="flex items-end border-b border-[#9eb6ce] pl-2 leading-5" style="height:${y - edges[n]}px">${digit}</div>`;
      }).join(""));
    </script>
  </body>
</html>
